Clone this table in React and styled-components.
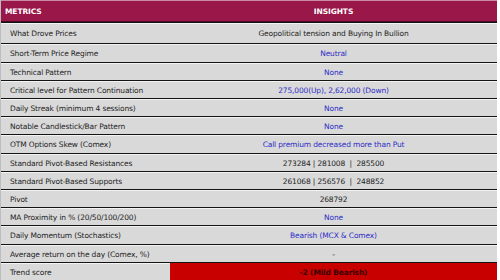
import React from "react";
import styled, { createGlobalStyle } from "styled-components";

const Global = createGlobalStyle`
  html, body { margin: 0; padding: 0; background: #ffffff; }
  body { font-family: "DejaVu Sans", Verdana, sans-serif; }
`;

const Table = styled.div`
  width: 497px;
  display: flex;
  flex-direction: column;
  border-left: 1px solid #bdbdbd;
  box-sizing: border-box;
`;

const HeadRow = styled.div`
  display: grid;
  grid-template-columns: 169px 1fr;
  height: 22px;
  background: #9a1749;
  border-top: 1px solid #c98aa3;
  border-bottom: 1px solid #4a0a22;
  box-sizing: border-box;
  align-items: center;
`;

const HeadCell = styled.div`
  color: #ffffff;
  font-weight: bold;
  font-size: 7.5px;
  letter-spacing: -0.1px;
  padding-left: ${(p) => (p.$center ? "0" : "4px")};
  text-align: ${(p) => (p.$center ? "center" : "left")};
`;

const Row = styled.div`
  display: grid;
  grid-template-columns: 169px 1fr;
  height: ${(p) => p.$h}px;
  box-sizing: border-box;
  border-top: 1px solid #141414;
  box-shadow: inset 0 1px 0 #f3f3f3;
  background: #d9d9d9;
`;

const Label = styled.div`
  display: flex;
  align-items: center;
  padding-left: 9px;
  padding-top: 1px;
  font-size: 7.5px;
  letter-spacing: -0.15px;
  color: #1e1e1e;
  white-space: nowrap;
`;

const Value = styled.div`
  display: flex;
  align-items: center;
  justify-content: center;
  padding-top: ${(p) => (p.$tone === "alert" ? "0" : "1px")};
  font-size: 7.5px;
  letter-spacing: -0.15px;
  white-space: pre;
  color: ${(p) => (p.$tone === "blue" ? "#2d2dc8" : p.$tone === "alert" ? "#3a0000" : "#1e1e1e")};
  background: ${(p) => (p.$tone === "alert" ? "#c90000" : "transparent")};
  font-weight: ${(p) => (p.$tone === "alert" ? "bold" : "normal")};
`;

const rows = [
  ["What Drove Prices", "Geopolitical tension and Buying In Bullion", "black"],
  ["Short-Term Price Regime", "Neutral", "blue"],
  ["Technical Pattern", "None", "blue"],
  ["Critical level for Pattern Continuation", "275,000(Up), 2,62,000 (Down)", "blue"],
  ["Daily Streak (minimum 4 sessions)", "None", "blue"],
  ["Notable Candlestick/Bar Pattern", "None", "blue"],
  ["OTM Options Skew (Comex)", "Call premium decreased more than Put", "blue"],
  ["Standard Pivot-Based Resistances", "273284 | 281008  |  285500", "black"],
  ["Standard Pivot-Based Supports", "261068 | 256576  |  248852", "black"],
  ["Pivot", "268792", "black"],
  ["MA Proximity in % (20/50/100/200)", "None", "blue"],
  ["Daily Momentum (Stochastics)", "Bearish (MCX & Comex)", "blue"],
  ["Average return on the day (Comex, %)", "-", "black"],
  ["Trend score", "-2 (Mild Bearish)", "alert"],
];

const heights = [21, 19, 18, 18, 18, 18, 19, 18, 18, 18, 18, 19, 18, 19];

export default function App() {
  return (
    <>
      <Global />
      <Table>
        <HeadRow>
          <HeadCell>METRICS</HeadCell>
          <HeadCell $center>INSIGHTS</HeadCell>
        </HeadRow>
        {rows.map(([label, value, tone], i) => (
          <Row key={label} $h={heights[i]}>
            <Label>{label}</Label>
            <Value $tone={tone}>{value}</Value>
          </Row>
        ))}
      </Table>
    </>
  );
}
